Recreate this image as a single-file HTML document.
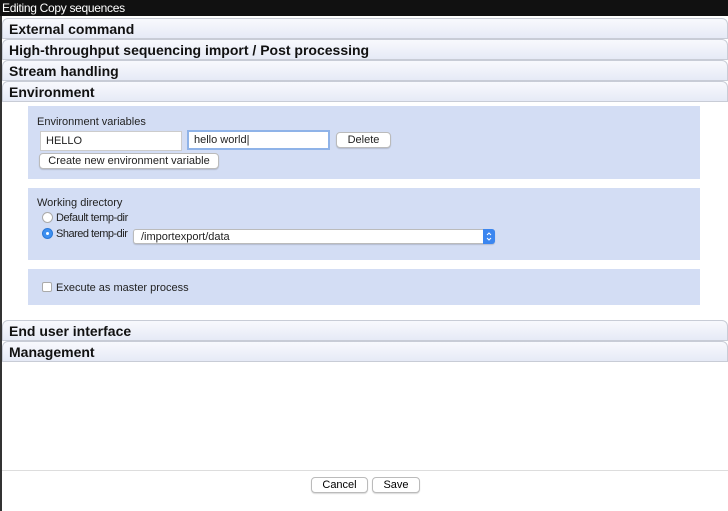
<!DOCTYPE html>
<html><head><style>
*{box-sizing:border-box}
body{margin:0;width:728px;height:511px;background:#fff;font-family:"Liberation Sans",Arial,sans-serif;position:relative;overflow:hidden}
.title{position:absolute;left:0;top:0;width:728px;height:16px;background:#111;color:#fff;font-size:12px;line-height:16px;padding-left:2px;letter-spacing:-0.3px}
.lb{position:absolute;left:0;top:16px;width:2px;height:495px;background:#333}
.h{position:absolute;left:2px;width:726px;height:21px;border:1px solid #c8ccd6;border-radius:6px 6px 0 0;background:linear-gradient(#f8f9fd,#e6eaf6);font-weight:bold;font-size:14px;line-height:20px;padding-left:6px;color:#111}
.p{position:absolute;left:28px;width:672px;background:#d3ddf4;font-size:11px;color:#222}
.in{position:absolute;height:20px;background:#fff;border:1px solid #ccc;font-size:11px;line-height:18px;padding-left:5px}
.btn{position:absolute;height:16px;background:#fff;border:1px solid #bbb;border-radius:4px;font-size:11px;line-height:14px;text-align:center;box-shadow:0 1px 1px rgba(0,0,0,.15)}
.rad{position:absolute;width:11px;height:11px;border-radius:50%;border:1px solid #aaa;background:#fff}
</style></head><body>
<div class="title">Editing Copy sequences</div>
<div class="lb"></div>
<div class="h" style="top:18px">External command</div>
<div class="h" style="top:39px">High-throughput sequencing import / Post processing</div>
<div class="h" style="top:60px">Stream handling</div>
<div class="h" style="top:81px">Environment</div>

<div class="p" style="top:106px;height:73px">
 <div style="position:absolute;left:9px;top:10px">Environment variables</div>
 <div class="in" style="left:12px;top:25px;width:142px">HELLO</div>
 <div class="in" style="left:159px;top:24px;width:143px;border:2px solid #8fb3e8;line-height:16px">hello world|</div>
 <div class="btn" style="left:308px;top:26px;width:55px">Delete</div>
 <div class="btn" style="left:11px;top:47px;width:180px">Create new environment variable</div>
</div>
<div class="p" style="top:188px;height:72px">
 <div style="position:absolute;left:9px;top:9px">Working directory</div>
 <div class="rad" style="left:14px;top:24px"></div>
 <div style="position:absolute;left:28px;top:24px;letter-spacing:-0.4px">Default temp-dir</div>
 <div class="rad" style="left:14px;top:40px;background:#3d8ff0;border-color:#2a78d8"><div style="width:3px;height:3px;background:#fff;border-radius:50%;margin:3px"></div></div>
 <div style="position:absolute;left:28px;top:40px;letter-spacing:-0.5px">Shared temp-dir</div>
 <div class="btn" style="left:105px;top:41px;width:362px;height:15px;text-align:left;padding-left:7px;border-radius:3px">/importexport/data</div>
 <div style="position:absolute;left:455px;top:41px;width:12px;height:15px;background:#3b86f0;border-radius:0 3px 3px 0"><svg width="12" height="15"><path d="M4 6l2-2 2 2M4 9l2 2 2-2" stroke="#fff" fill="none" stroke-width="1"/></svg></div>
</div>
<div class="p" style="top:269px;height:36px">
 <div style="position:absolute;left:14px;top:13px;width:10px;height:10px;border:1px solid #aaa;background:#fff;border-radius:2px"></div>
 <div style="position:absolute;left:28px;top:13px">Execute as master process</div>
</div>

<div class="h" style="top:320px">End user interface</div>
<div class="h" style="top:341px">Management</div>
<div style="position:absolute;left:2px;top:470px;width:726px;height:1px;background:#ddd"></div>
<div class="btn" style="left:311px;top:477px;width:57px">Cancel</div>
<div class="btn" style="left:372px;top:477px;width:48px">Save</div>
</body></html>
